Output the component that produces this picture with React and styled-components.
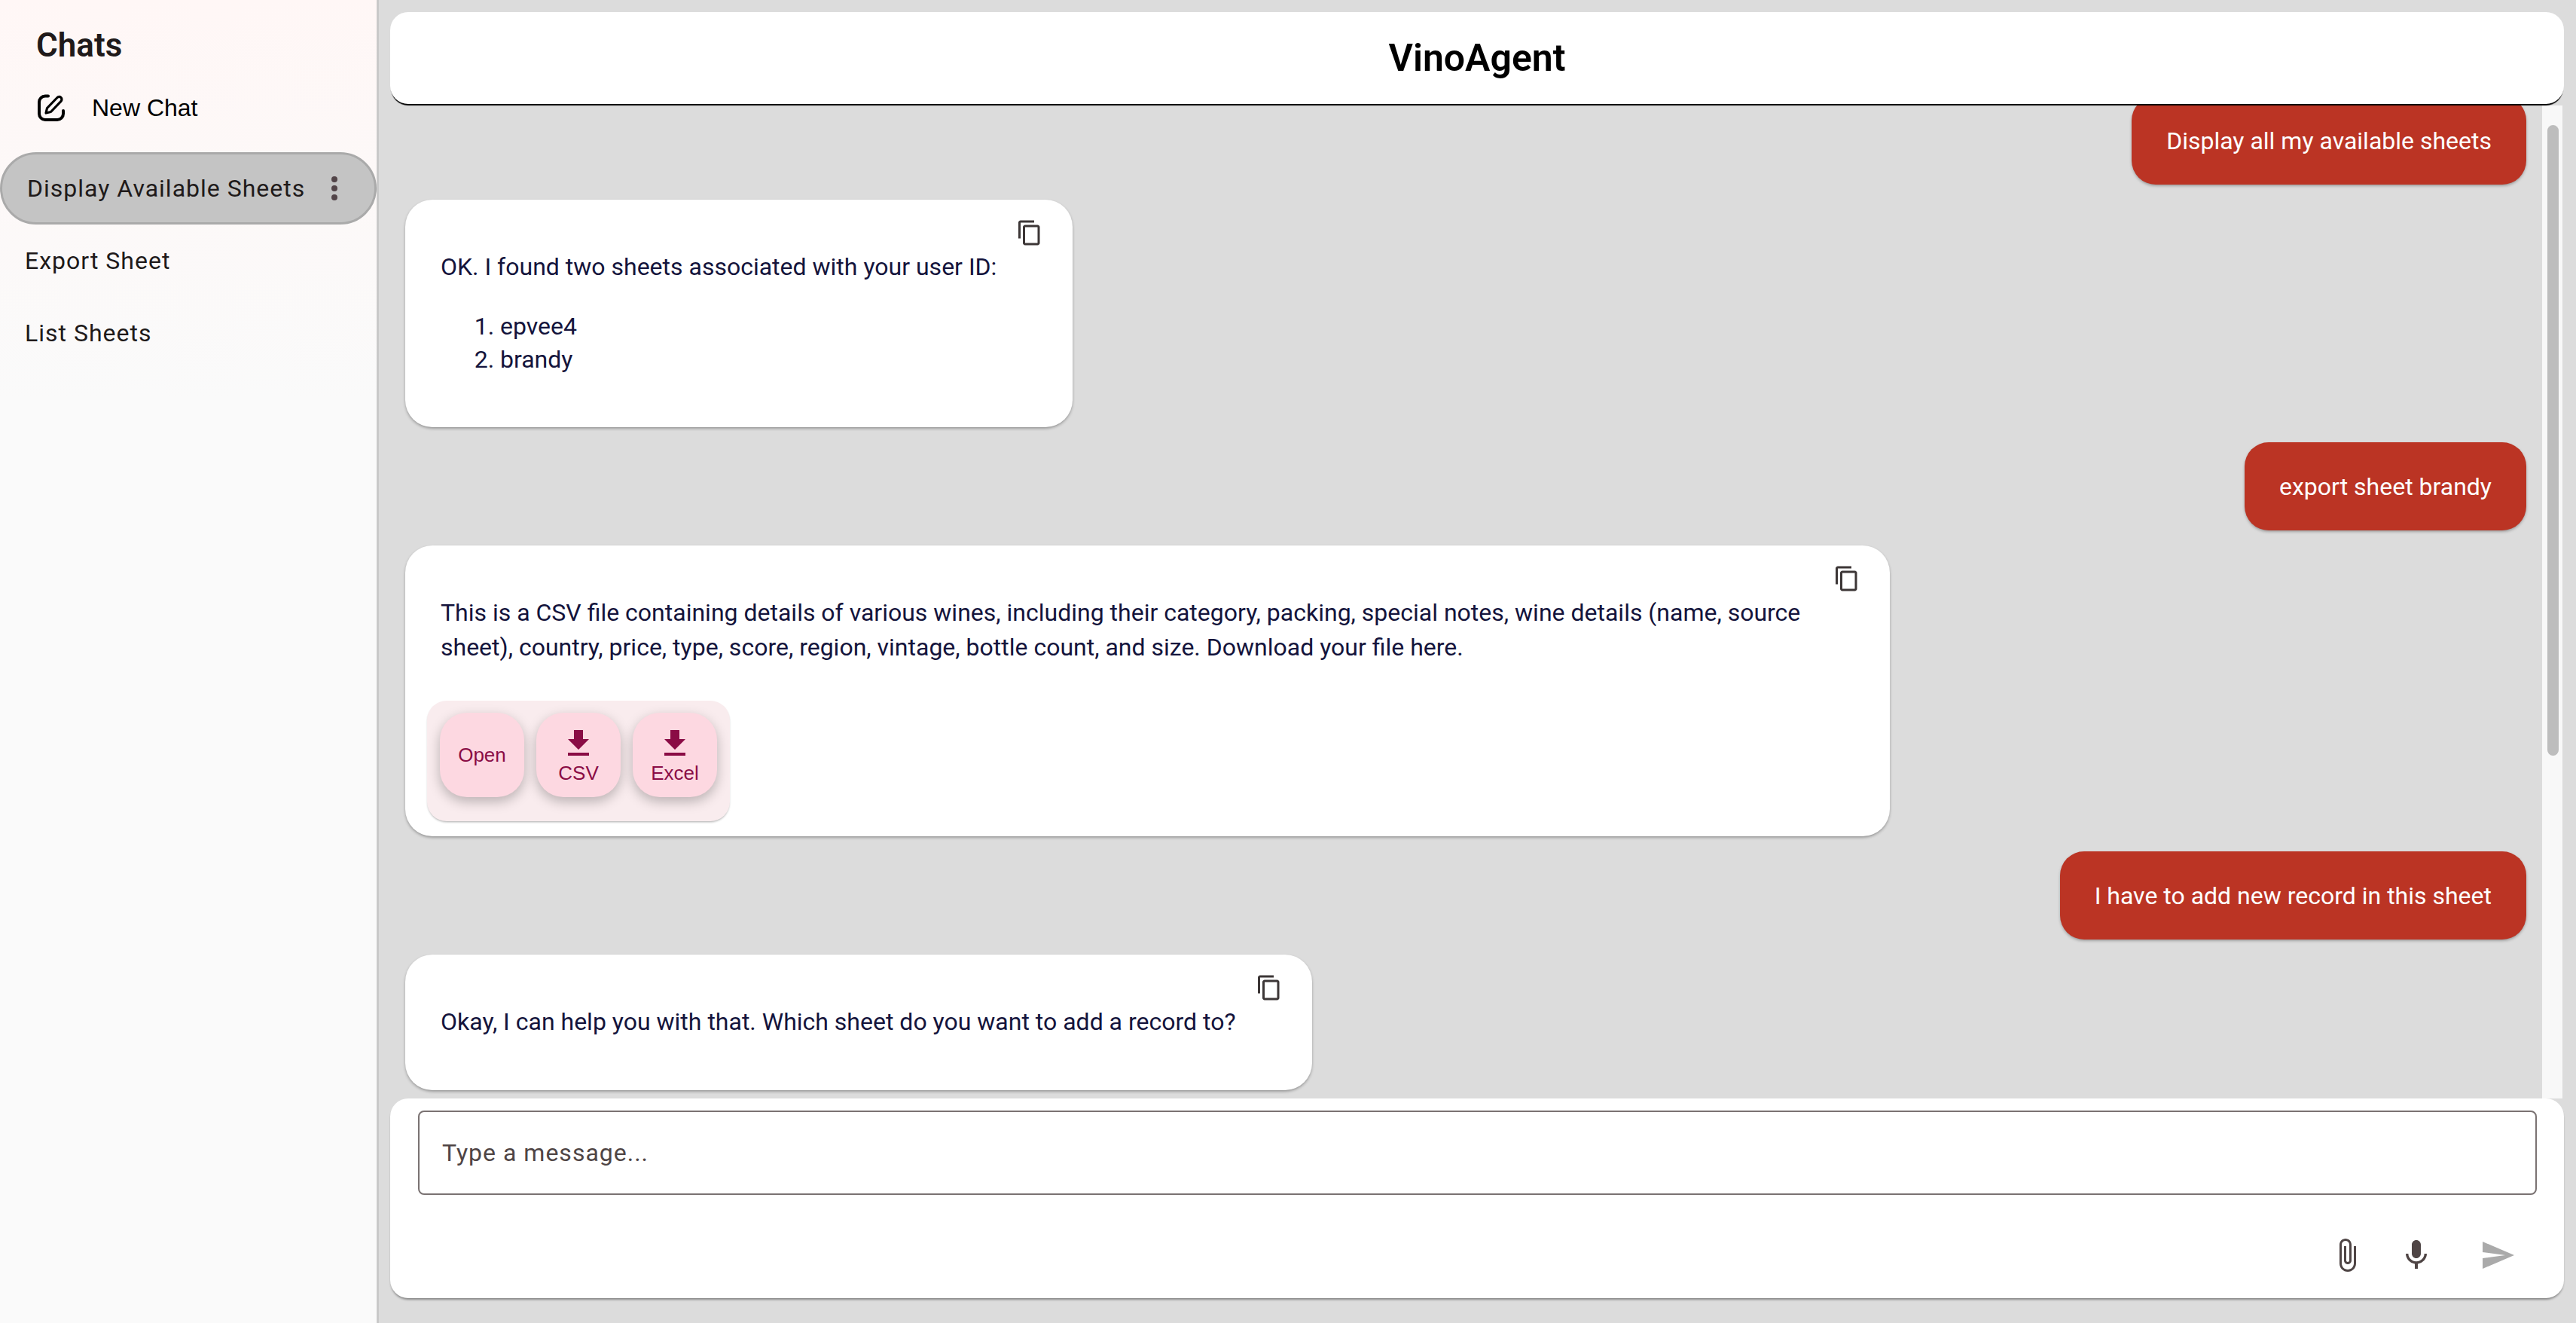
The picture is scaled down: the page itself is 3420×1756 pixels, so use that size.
import React from 'react';
import styled, { createGlobalStyle } from 'styled-components';

const GlobalStyle = createGlobalStyle`
  html, body {
    margin: 0;
    padding: 0;
    height: 100%;
    overflow: hidden;
    background: #dcdcdc;
    font-family: Roboto, "Liberation Sans", sans-serif;
  }
  * {
    box-sizing: border-box;
  }
`;

const Page = styled.div`
  display: flex;
  height: 100vh;
  overflow: hidden;
`;

const Sidebar = styled.aside`
  width: 503px;
  flex-shrink: 0;
  background: linear-gradient(180deg, #fff7f6 0%, #fafafa 30%);
  border-right: 3px solid #c9c9c9;
  display: flex;
  flex-direction: column;
`;

const SidebarTitle = styled.h2`
  margin: 34px 0 0 48px;
  font-size: 44px;
  line-height: 52px;
  font-weight: 600;
  color: #201a1a;
`;

const NewChatRow = styled.div`
  display: flex;
  align-items: center;
  gap: 36px;
  margin: 37px 0 0 50px;
  height: 40px;
  font-family: "Liberation Sans", Arial, sans-serif;
  font-size: 32px;
  color: #000;
`;

const ChatList = styled.div`
  display: flex;
  flex-direction: column;
  margin-top: 39px;
`;

const ChatItem = styled.div`
  display: flex;
  align-items: center;
  justify-content: space-between;
  height: 96px;
  padding: ${p => (p.$active ? '0 36px 0 33px' : '0 33px')};
  font-size: 32px;
  letter-spacing: 1px;
  color: #201a1a;
  border-radius: 48px;
  ${p => p.$active && 'background: #c4c4c4; border: 3px solid #aaa;'}
`;

const MoreDots = styled.span`
  display: flex;
  flex-direction: column;
  gap: 4px;
  margin-right: 13px;
  i {
    width: 8px;
    height: 8px;
    border-radius: 50%;
    background: #524448;
  }
`;

const Main = styled.main`
  flex: 1;
  min-width: 0;
  display: flex;
  flex-direction: column;
  padding: 16px 16px 33px 15px;
`;

const Header = styled.header`
  position: relative;
  z-index: 2;
  flex-shrink: 0;
  height: 122px;
  display: flex;
  align-items: center;
  justify-content: center;
  background: #fff;
  border-radius: 24px;
  box-shadow: 0 3px 1px -1px #000;
`;

const Title = styled.h1`
  margin: 0;
  font-size: 50px;
  font-weight: 600;
  color: #000;
`;

const ChatArea = styled.div`
  flex: 1;
  min-height: 0;
  display: flex;
  overflow: hidden;
`;

const MessageList = styled.div`
  flex: 1;
  min-width: 0;
  display: flex;
  flex-direction: column;
  gap: 20px;
  padding: 0 21px 0 20px;
  overflow: hidden;
`;

const UserBubble = styled.div`
  align-self: flex-end;
  flex-shrink: 0;
  padding: 36px 46px 35px;
  margin-top: ${p => p.$top || 0}px;
  font-size: 32px;
  line-height: 46px;
  color: #fff;
  background: #bb3424;
  border-radius: 32px;
  box-shadow: 0 2px 4px -1px rgba(0, 0, 0, 0.4);
`;

const BotBubble = styled.div`
  position: relative;
  align-self: flex-start;
  flex-shrink: 0;
  max-width: 70%;
  padding: 66px 101px ${p => (p.$hasActions ? '20px' : '68px')} 47px;
  font-size: 32px;
  line-height: 46px;
  color: #14143c;
  background: #fff;
  border-radius: 36px;
  box-shadow: 0 2px 4px -1px rgba(0, 0, 0, 0.45);
`;

const BotText = styled.p`
  margin: 0;
`;

const NumberedList = styled.ol`
  margin: 34px 0 0;
  padding: 0 0 0 79px;
  line-height: 44px;
`;

const CopyButton = styled.span`
  position: absolute;
  top: 26px;
  right: 39px;
  width: 36px;
  height: 36px;
  color: #3c3636;
  svg {
    display: block;
  }
`;

const ActionGroup = styled.div`
  display: flex;
  gap: 16px;
  width: fit-content;
  margin: 48px 0 0 -18px;
  padding: 16px 17px 32px;
  background: #f9ecee;
  border-radius: 26px;
  box-shadow: 0 2px 3px -1px rgba(0, 0, 0, 0.35);
`;

const ActionButton = styled.div`
  width: 112px;
  height: 112px;
  display: flex;
  flex-direction: column;
  align-items: center;
  justify-content: center;
  font-family: "Liberation Sans", Arial, sans-serif;
  font-size: 26px;
  line-height: 30px;
  color: #8a0c45;
  background: #fdd8e1;
  border-radius: 36px;
  box-shadow: 0 6px 16px rgba(0, 0, 0, 0.25);
`;

const ScrollTrack = styled.div`
  flex-shrink: 0;
  width: 27px;
  margin-right: 2px;
  padding: 26px 5px 0 7px;
  margin-top: 2px;
  background: #f8f8f8;
`;

const ScrollThumb = styled.div`
  height: 837px;
  border-radius: 8px;
  background: #bdbdbd;
`;

const Composer = styled.div`
  position: relative;
  z-index: 2;
  flex-shrink: 0;
  height: 265px;
  padding: 16px 36px 0 37px;
  background: #fff;
  border-radius: 24px;
  box-shadow: 0 3px 3px -1px rgba(0, 0, 0, 0.4);
`;

const MessageInput = styled.input`
  display: block;
  width: 100%;
  height: 112px;
  padding: 0 30px;
  font-family: Roboto, sans-serif;
  font-size: 32px;
  letter-spacing: 1px;
  color: #4f4545;
  background: #fff;
  border: 2px solid #7a7272;
  border-radius: 8px;
  outline: none;
  &::placeholder {
    color: #4f4545;
    opacity: 1;
  }
`;

const ComposerActions = styled.div`
  display: flex;
  justify-content: flex-end;
  align-items: center;
  margin-top: 56px;
  padding-right: 28px;
`;

const IconSlot = styled.span`
  width: 48px;
  height: 48px;
  margin-left: ${p => p.$gap || 0}px;
  color: ${p => p.$color || '#4f4545'};
  svg {
    display: block;
  }
`;

const MaterialIcon = ({ d, size = 48 }) => (
  <svg width={size} height={size} viewBox="0 0 24 24" fill="currentColor">
    <path d={d} />
  </svg>
);

const COPY = 'M16 1H4c-1.1 0-2 .9-2 2v14h2V3h12V1zm3 4H8c-1.1 0-2 .9-2 2v14c0 1.1.9 2 2 2h11c1.1 0 2-.9 2-2V7c0-1.1-.9-2-2-2zm0 16H8V7h11v14z';
const DOWNLOAD = 'M5 20h14v-2H5v2zM19 9h-4V3H9v6H5l7 7 7-7z';
const ATTACH = 'M16.5 6v11.5c0 2.21-1.79 4-4 4s-4-1.79-4-4V5c0-1.38 1.12-2.5 2.5-2.5s2.5 1.12 2.5 2.5v10.5c0 .55-.45 1-1 1s-1-.45-1-1V6H10v9.5c0 1.38 1.12 2.5 2.5 2.5s2.5-1.12 2.5-2.5V5c0-2.21-1.79-4-4-4S7 2.79 7 5v12.5c0 3.04 2.46 5.5 5.5 5.5s5.5-2.46 5.5-5.5V6h-1.5z';
const MIC = 'M12 14c1.66 0 2.99-1.34 2.99-3L15 5c0-1.66-1.34-3-3-3S9 3.34 9 5v6c0 1.66 1.34 3 3 3zm5.3-3c0 3-2.54 5.1-5.3 5.1S6.7 14 6.7 11H5c0 3.41 2.72 6.23 6 6.72V21h2v-3.28c3.28-.48 6-3.3 6-6.72h-1.7z';
const SEND = 'M2.01 21L23 12 2.01 3 2 10l15 2-15 2z';

const NewChatIcon = () => (
  <svg width="36" height="36" viewBox="0 0 36 36" fill="none" stroke="#000" strokeWidth="4" strokeLinecap="round" strokeLinejoin="round">
    <path d="M14 2.5H10a8 8 0 0 0-8 8V26a8 8 0 0 0 8 8h16a8 8 0 0 0 8-8v-4" />
    <path d="M11 25l1.5-6.5L26 4.5a3.4 3.4 0 0 1 5 4.8L17.5 23.5z" strokeWidth="3.2" />
  </svg>
);

const Copy = () => (
  <CopyButton>
    <MaterialIcon d={COPY} size={36} />
  </CopyButton>
);

const App = () => {
  return (
    <Page>
      <GlobalStyle />
      <Sidebar>
        <SidebarTitle>Chats</SidebarTitle>
        <NewChatRow>
          <NewChatIcon />
          New Chat
        </NewChatRow>
        <ChatList>
          <ChatItem $active>
            Display Available Sheets
            <MoreDots><i /><i /><i /></MoreDots>
          </ChatItem>
          <ChatItem>Export Sheet</ChatItem>
          <ChatItem>List Sheets</ChatItem>
        </ChatList>
      </Sidebar>
      <Main>
        <Header>
          <Title>VinoAgent</Title>
        </Header>
        <ChatArea>
          <MessageList>
            <UserBubble $top={-10}>Display all my available sheets</UserBubble>
            <BotBubble>
              <Copy />
              <BotText>OK. I found two sheets associated with your user ID:</BotText>
              <NumberedList>
                <li>epvee4</li>
                <li>brandy</li>
              </NumberedList>
            </BotBubble>
            <UserBubble>export sheet brandy</UserBubble>
            <BotBubble $hasActions>
              <Copy />
              <BotText>
                This is a CSV file containing details of various wines, including their category, packing, special notes, wine details (name, source sheet), country, price, type, score, region, vintage, bottle count, and size. Download your file here.
              </BotText>
              <ActionGroup>
                <ActionButton>Open</ActionButton>
                <ActionButton>
                  <MaterialIcon d={DOWNLOAD} />
                  CSV
                </ActionButton>
                <ActionButton>
                  <MaterialIcon d={DOWNLOAD} />
                  Excel
                </ActionButton>
              </ActionGroup>
            </BotBubble>
            <UserBubble>I have to add new record in this sheet</UserBubble>
            <BotBubble>
              <Copy />
              <BotText>Okay, I can help you with that. Which sheet do you want to add a record to?</BotText>
            </BotBubble>
          </MessageList>
          <ScrollTrack>
            <ScrollThumb />
          </ScrollTrack>
        </ChatArea>
        <Composer>
          <MessageInput placeholder="Type a message..." />
          <ComposerActions>
            <IconSlot><MaterialIcon d={ATTACH} /></IconSlot>
            <IconSlot $gap={44}><MaterialIcon d={MIC} /></IconSlot>
            <IconSlot $gap={60} $color="#aaa"><MaterialIcon d={SEND} /></IconSlot>
          </ComposerActions>
        </Composer>
      </Main>
    </Page>
  );
};

export default App;
